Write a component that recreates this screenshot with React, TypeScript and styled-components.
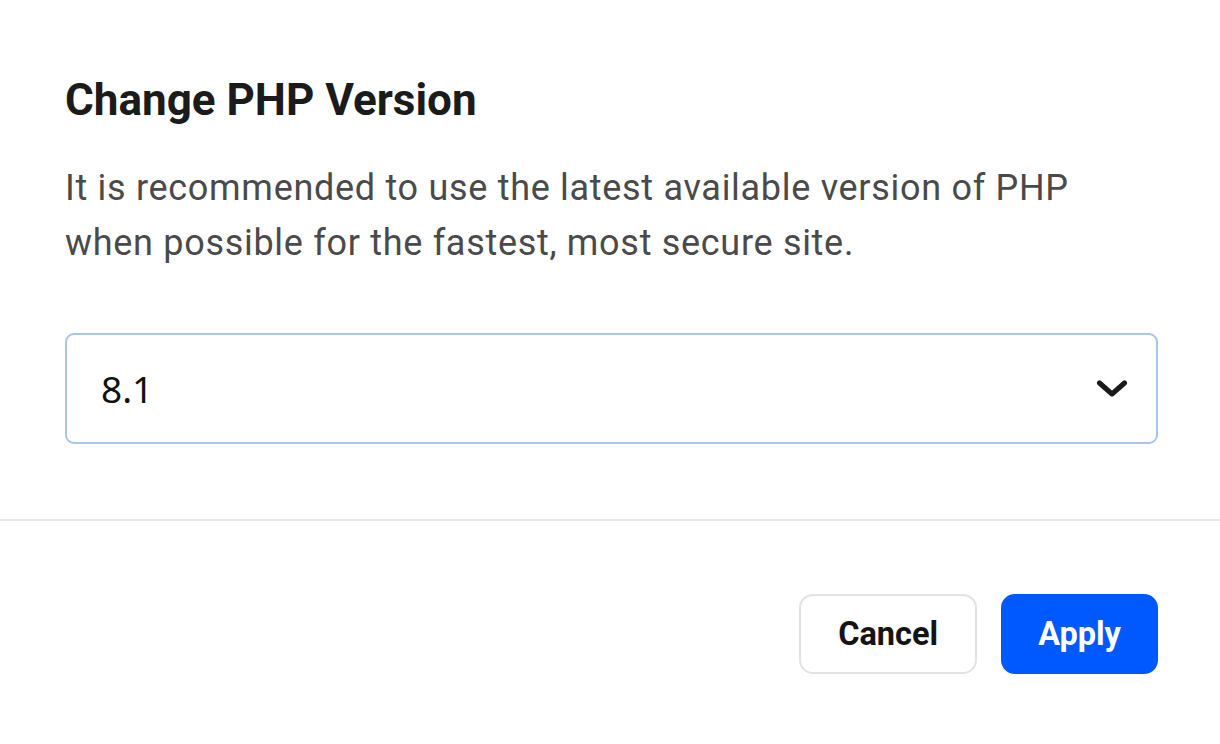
import styled, { createGlobalStyle } from 'styled-components';

const GlobalStyle = createGlobalStyle`
  body {
    margin: 0;
    background: #ffffff;
    font-family: Roboto, 'Liberation Sans', sans-serif;
  }
`;

const Dialog = styled.div`
  width: 1220px;
  height: 744px;
  background: #ffffff;
  display: flex;
  flex-direction: column;
`;

const Content = styled.div`
  padding: 74px 62px 0 65px;
`;

const Title = styled.h2`
  margin: 0;
  font-size: 44px;
  line-height: 53px;
  font-weight: 700;
  color: #1b1b1b;
`;

const Description = styled.p`
  margin: 34px 0 0;
  font-size: 36px;
  line-height: 55px;
  letter-spacing: 0.7px;
  color: #4a4a4a;
`;

const SelectBox = styled.div`
  margin-top: 62px;
  height: 111px;
  box-sizing: border-box;
  border: 2px solid #aac4ee;
  border-radius: 9px;
  display: flex;
  align-items: center;
  justify-content: space-between;
  padding: 0 28px 0 34px;
`;

const SelectValue = styled.span`
  font-family: 'Noto Sans', 'Open Sans', sans-serif;
  font-size: 37px;
  color: #111111;
`;

const Divider = styled.hr`
  margin: 75px 0 0;
  border: 0;
  height: 2px;
  background: #e6e6e6;
`;

const Footer = styled.div`
  display: flex;
  justify-content: flex-end;
  gap: 24px;
  padding: 73px 62px 0 0;
`;

const Button = styled.button<{ primary?: boolean }>`
  height: 80px;
  box-sizing: border-box;
  padding: 0 ${({ primary }) => (primary ? '35px' : '37px')};
  border-radius: 14px;
  border: 2px solid ${({ primary }) => (primary ? '#0059ff' : '#e3e3e3')};
  background: ${({ primary }) => (primary ? '#0059ff' : '#ffffff')};
  color: ${({ primary }) => (primary ? '#ffffff' : '#141414')};
  font-family: Roboto, 'Liberation Sans', sans-serif;
  font-size: 32.5px;
  font-weight: 700;
  cursor: pointer;
`;

const Chevron = () => (
  <svg width="32" height="20" viewBox="0 0 32 20" fill="none">
    <path
      d="M3.5 4 L16 15 L28.5 4"
      stroke="#1a1a1a"
      strokeWidth="5"
      strokeLinecap="round"
      strokeLinejoin="round"
    />
  </svg>
);

const App = () => {
  return (
    <>
      <GlobalStyle />
      <Dialog>
        <Content>
          <Title>Change PHP Version</Title>
          <Description>
            It is recommended to use the latest available version of PHP
            <br />
            when possible for the fastest, most secure site.
          </Description>
          <SelectBox>
            <SelectValue>8.1</SelectValue>
            <Chevron />
          </SelectBox>
        </Content>
        <Divider />
        <Footer>
          <Button>Cancel</Button>
          <Button primary>Apply</Button>
        </Footer>
      </Dialog>
    </>
  );
};

export default App;
